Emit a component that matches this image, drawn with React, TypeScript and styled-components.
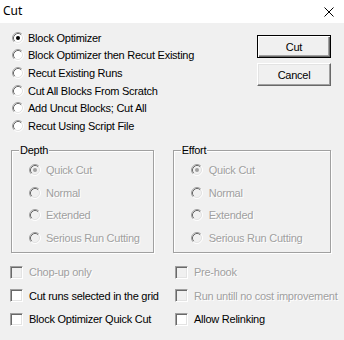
import React from 'react';
import styled, { createGlobalStyle } from 'styled-components';

const GlobalStyle = createGlobalStyle`
    html, body {
        margin: 0;
        padding: 0;
        background: #f0f0f0;
    }
    body {
        font-family: "Liberation Sans", Arial, sans-serif;
        font-size: 11px;
        letter-spacing: -0.25px;
        color: #000000;
    }
`;

const Window = styled.div`
    width: 344px;
    height: 340px;
    background: #f0f0f0;
    overflow: hidden;
`;

const TitleBar = styled.div`
    height: 23px;
    background: #ffffff;
    display: flex;
    align-items: center;
    justify-content: space-between;
    padding: 0 10px 0 3px;
`;

const TitleText = styled.span`
    font-family: "Noto Sans", "Open Sans", sans-serif;
    font-size: 12px;
    letter-spacing: 0;
    line-height: 1;
    margin-top: -1px;
`;

const CloseIcon = () => (
    <svg width="10" height="10" viewBox="0 0 10 10" style={{ marginTop: 1 }}>
        <path d="M0.5 0.5 L9.5 9.5 M9.5 0.5 L0.5 9.5" stroke="#000" strokeWidth="1" />
    </svg>
);

const Body = styled.div`
    padding: 6px 13px 0 12px;
`;

const TopRow = styled.div`
    display: flex;
    justify-content: space-between;
`;

const RadioList = styled.div`
    display: flex;
    flex-direction: column;
`;

const OptionRow = styled.label<{ $height: number; $gap: number }>`
    display: flex;
    align-items: center;
    height: ${(p) => p.$height}px;
    gap: ${(p) => p.$gap}px;
    white-space: nowrap;
`;

const Caption = styled.span<{ $disabled?: boolean }>`
    color: ${(p) => (p.$disabled ? '#a0a0a0' : '#000000')};
    text-shadow: ${(p) => (p.$disabled ? '1px 1px 0 #ffffff' : 'none')};
`;

const ButtonColumn = styled.div`
    display: flex;
    flex-direction: column;
    gap: 5px;
    margin-top: 6px;
`;

const Button = styled.button<{ $default?: boolean }>`
    width: 74px;
    height: 23px;
    padding: 0;
    font-family: "Liberation Sans", Arial, sans-serif;
    font-size: 11px;
    letter-spacing: -0.25px;
    color: #000;
    background: #f0f0f0;
    box-sizing: border-box;
    border: 1px solid;
    border-color: ${(p) => (p.$default ? '#000000' : '#ffffff #696969 #696969 #ffffff')};
    box-shadow: ${(p) =>
        p.$default
            ? 'inset 1px 1px 0 #ffffff, inset -1px -1px 0 #696969, inset -2px -2px 0 #a0a0a0'
            : 'inset -1px -1px 0 #a0a0a0, inset 1px 1px 0 #e3e3e3'};
`;

const GroupRow = styled.div`
    display: flex;
    margin: 15px 0 0 -1px;
    gap: 19px;
`;

const GroupBox = styled.div<{ $width: number; $pad: number }>`
    position: relative;
    width: ${(p) => p.$width}px;
    height: 103px;
    box-sizing: border-box;
    border: 1px solid #a0a0a0;
    box-shadow: inset 1px 1px 0 #ffffff, 1px 1px 0 #ffffff;
    padding: 8px 0 0 ${(p) => p.$pad}px;
    display: flex;
    flex-direction: column;
`;

const GroupLabel = styled.span`
    position: absolute;
    top: -8px;
    left: 7px;
    padding: 0 1px;
    background: #f0f0f0;
    line-height: 14px;
`;

const CheckGrid = styled.div`
    display: grid;
    grid-template-columns: 165px 1fr;
    margin: 8px 0 0 -2px;
`;

const CheckBox = styled.span<{ $disabled?: boolean }>`
    display: inline-block;
    width: 13px;
    height: 13px;
    box-sizing: border-box;
    flex: none;
    background: ${(p) => (p.$disabled ? '#f0f0f0' : '#ffffff')};
    border: 1px solid;
    border-color: #a0a0a0 #ffffff #ffffff #a0a0a0;
    box-shadow: inset 1px 1px 0 #696969, inset -1px -1px 0 #e3e3e3;
`;

const RadioDot: React.FC<{ checked?: boolean; disabled?: boolean }> = ({ checked, disabled }) => (
    <svg width="12" height="12" viewBox="0 0 12 12" style={{ flex: 'none' }}>
        <circle cx="6" cy="6" r="5" fill={disabled ? '#f0f0f0' : '#ffffff'} />
        <path d="M2.11 9.89 A5.5 5.5 0 0 1 9.89 2.11" stroke="#a0a0a0" strokeWidth="1" fill="none" />
        <path d="M2.82 9.18 A4.5 4.5 0 0 1 9.18 2.82" stroke="#696969" strokeWidth="1" fill="none" />
        <path d="M9.89 2.11 A5.5 5.5 0 0 1 2.11 9.89" stroke="#ffffff" strokeWidth="1" fill="none" />
        <path d="M9.18 2.82 A4.5 4.5 0 0 1 2.82 9.18" stroke="#e3e3e3" strokeWidth="1" fill="none" />
        {checked && <circle cx="6" cy="6" r="2" fill={disabled ? '#a0a0a0' : '#000000'} />}
    </svg>
);

const mainOptions = [
    'Block Optimizer',
    'Block Optimizer then Recut Existing',
    'Recut Existing Runs',
    'Cut All Blocks From Scratch',
    'Add Uncut Blocks; Cut All',
    'Recut Using Script File',
];

const levels = ['Quick Cut', 'Normal', 'Extended', 'Serious Run Cutting'];

const checks: { label: string; disabled?: boolean }[] = [
    { label: 'Chop-up only', disabled: true },
    { label: 'Pre-hook', disabled: true },
    { label: 'Cut runs selected in the grid' },
    { label: 'Run untill no cost improvement', disabled: true },
    { label: 'Block Optimizer Quick Cut' },
    { label: 'Allow Relinking' },
];

const Group: React.FC<{ title: string; width: number; pad: number; gap: number }> = ({ title, width, pad, gap }) => (
    <GroupBox $width={width} $pad={pad}>
        <GroupLabel>{title}</GroupLabel>
        {levels.map((l, i) => (
            <OptionRow key={l} $height={22.7} $gap={gap}>
                <RadioDot checked={i === 0} disabled />
                <Caption $disabled>{l}</Caption>
            </OptionRow>
        ))}
    </GroupBox>
);

export default function App() {
    return (
        <>
            <GlobalStyle />
            <Window>
                <TitleBar>
                    <TitleText>Cut</TitleText>
                    <CloseIcon />
                </TitleBar>
                <Body>
                    <TopRow>
                        <RadioList>
                            {mainOptions.map((o, i) => (
                                <OptionRow key={o} $height={17.6} $gap={4}>
                                    <RadioDot checked={i === 0} />
                                    <Caption>{o}</Caption>
                                </OptionRow>
                            ))}
                        </RadioList>
                        <ButtonColumn>
                            <Button $default>Cut</Button>
                            <Button>Cancel</Button>
                        </ButtonColumn>
                    </TopRow>
                    <GroupRow>
                        <Group title="Depth" width={146} pad={17} gap={5} />
                        <Group title="Effort" width={162} pad={17} gap={6} />
                    </GroupRow>
                    <CheckGrid>
                        {checks.map((c) => (
                            <OptionRow key={c.label} $height={23.5} $gap={6}>
                                <CheckBox $disabled={c.disabled} />
                                <Caption $disabled={c.disabled}>{c.label}</Caption>
                            </OptionRow>
                        ))}
                    </CheckGrid>
                </Body>
            </Window>
        </>
    );
}
